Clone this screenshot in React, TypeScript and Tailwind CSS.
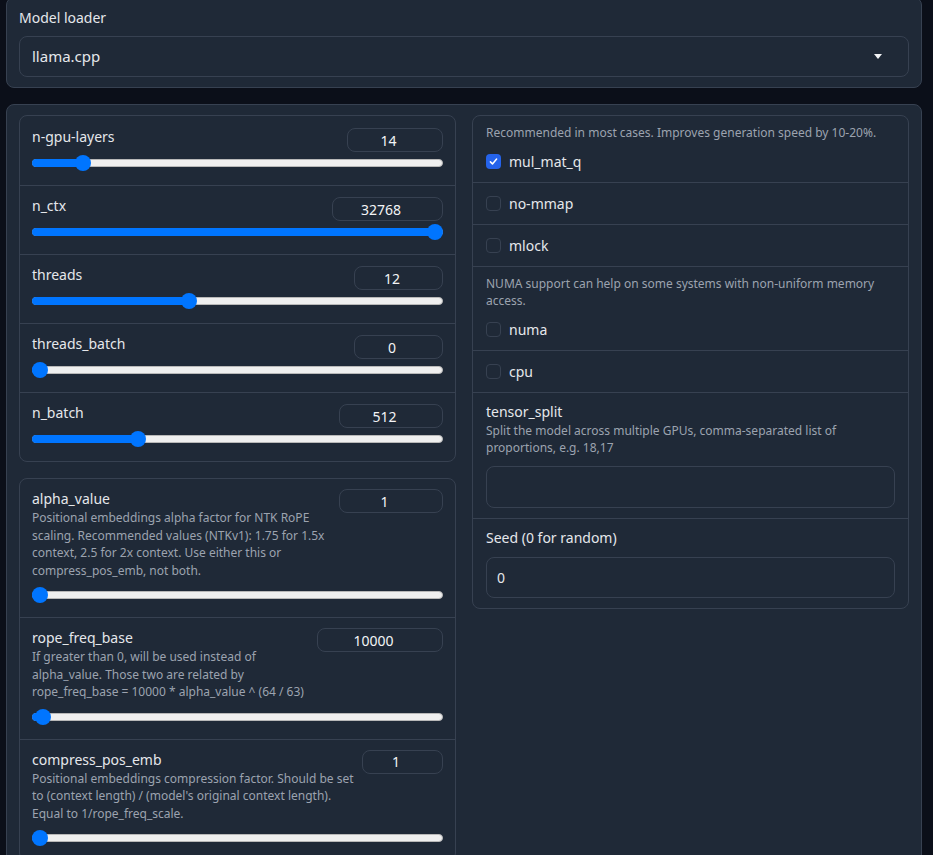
import React from 'react';

type SliderRow = {
  label: string;
  value: string;
  inputW: string;
  pos: number;
  info?: string;
};

const topSliders: SliderRow[] = [
  { label: 'n-gpu-layers', value: '14', inputW: 'w-[96px]', pos: 0.109 },
  { label: 'n_ctx', value: '32768', inputW: 'w-[111px]', pos: 1 },
  { label: 'threads', value: '12', inputW: 'w-[89px]', pos: 0.376 },
  { label: 'threads_batch', value: '0', inputW: 'w-[89px]', pos: 0 },
  { label: 'n_batch', value: '512', inputW: 'w-[104px]', pos: 0.249 },
];

const ropeSliders: SliderRow[] = [
  {
    label: 'alpha_value',
    value: '1',
    inputW: 'w-[104px]',
    pos: 0,
    info: 'Positional embeddings alpha factor for NTK RoPE scaling. Recommended values (NTKv1): 1.75 for 1.5x context, 2.5 for 2x context. Use either this or compress_pos_emb, not both.',
  },
  {
    label: 'rope_freq_base',
    value: '10000',
    inputW: 'w-[126px]',
    pos: 0.008,
    info: 'If greater than 0, will be used instead of alpha_value. Those two are related by rope_freq_base = 10000 * alpha_value ^ (64 / 63)',
  },
  {
    label: 'compress_pos_emb',
    value: '1',
    inputW: 'w-[81px]',
    pos: 0,
    info: "Positional embeddings compression factor. Should be set to (context length) / (model's original context length). Equal to 1/rope_freq_scale.",
  },
];

function Slider({ pos }: { pos: number }) {
  return (
    <div className="relative h-4 w-full">
      <div className="absolute left-0 right-0 top-1/2 h-[8px] -translate-y-1/2 rounded-full border border-[#b8b8b8] bg-[#efefef]" />
      <div
        className="absolute left-0 top-1/2 h-[8px] -translate-y-1/2 rounded-full bg-[#0075ff]"
        style={{ width: `calc(8px + (100% - 16px) * ${pos})` }}
      />
      <div
        className="absolute top-0 h-4 w-4 rounded-full bg-[#0075ff]"
        style={{ left: `calc((100% - 16px) * ${pos})` }}
      />
    </div>
  );
}

function NumberBox({ value, w }: { value: string; w: string }) {
  return (
    <div
      className={`${w} flex h-[24px] shrink-0 items-center justify-center rounded-lg border border-[#374151] bg-[#1f2937] pr-[13px] text-[14px] text-[#f3f4f6]`}
    >
      {value}
    </div>
  );
}

function Checkbox({ label, checked }: { label: string; checked?: boolean }) {
  return (
    <div className="flex h-[21px] items-center gap-2">
      {checked ? (
        <div className="flex h-[15px] w-[15px] items-center justify-center rounded-[4px] bg-[#2563eb]">
          <svg viewBox="0 0 16 16" className="h-[11px] w-[11px]" fill="none">
            <path d="M3.5 8.5l3 3 6-7" stroke="white" strokeWidth="2.2" strokeLinecap="round" strokeLinejoin="round" />
          </svg>
        </div>
      ) : (
        <div className="h-[15px] w-[15px] rounded-[4px] border border-[#374151] bg-[#1f2937]" />
      )}
      <span className="text-[14px] text-[#e5e7eb]">{label}</span>
    </div>
  );
}

export default function App() {
  return (
    <div className="min-h-[855px] bg-[#0b0f19] pl-[6px] pr-[11px] font-['Noto_Sans',sans-serif] text-[#e5e7eb]">
      {/* model loader */}
      <div className="-mt-[3px] rounded-lg border border-[#374151] bg-[#1f2937] px-[12px] pt-[10px] pb-[10px]">
        <div className="text-[14px] leading-[20px]">Model loader</div>
        <div className="mt-[8px] flex h-[41px] items-center justify-between rounded-lg border border-[#374151] bg-[#1f2937] pl-[12px] pr-[26px]">
          <span className="text-[15px]">llama.cpp</span>
          <svg viewBox="0 0 8 5" className="h-[5px] w-[8px]">
            <path d="M0 0h8L4 5z" fill="#f3f4f6" />
          </svg>
        </div>
      </div>

      <div className="mt-[16px] rounded-lg border border-[#374151] bg-[#1f2937] px-[12px] pt-[10px] pb-[12px]">
        <div className="grid grid-cols-2 items-start gap-4">
          {/* left column */}
          <div className="flex flex-col gap-4">
            <div className="rounded-lg border border-[#374151]">
              {topSliders.map((s, i) => (
                <div
                  key={s.label}
                  className={`px-[12px] pb-[14px] ${i === 0 ? 'pt-[12px]' : 'pt-[11px]'} ${i < topSliders.length - 1 ? 'border-b border-[#374151]' : ''}`}
                >
                  <div className="flex items-start justify-between">
                    <span className="-mt-[1px] text-[14px] leading-[20px]">{s.label}</span>
                    <NumberBox value={s.value} w={s.inputW} />
                  </div>
                  <div className="mt-[3px]">
                    <Slider pos={s.pos} />
                  </div>
                </div>
              ))}
            </div>

            <div className="rounded-lg border border-[#374151]">
              {ropeSliders.map((s, i) => (
                <div
                  key={s.label}
                  className={`px-[12px] pt-[10px] pb-[14px] ${i < ropeSliders.length - 1 ? 'border-b border-[#374151]' : ''}`}
                >
                  <div className="flex items-start gap-[8px]">
                    <div className="flex-1">
                      <div className="text-[14px] leading-[20px]">{s.label}</div>
                      <div className="text-[12px] leading-[17.5px] text-[#9ca3af]">{s.info}</div>
                    </div>
                    <NumberBox value={s.value} w={s.inputW} />
                  </div>
                  <div className="mt-[8px]">
                    <Slider pos={s.pos} />
                  </div>
                </div>
              ))}
            </div>
          </div>

          {/* right column */}
          <div className="rounded-lg border border-[#374151]">
            <div className="border-b border-[#374151] px-[13px] pt-[8px] pb-[10px]">
              <div className="text-[12px] leading-[17.5px] text-[#9ca3af]">
                Recommended in most cases. Improves generation speed by 10-20%.
              </div>
              <div className="mt-[9px]">
                <Checkbox label="mul_mat_q" checked />
              </div>
            </div>
            <div className="border-b border-[#374151] px-[13px] py-[10px]">
              <Checkbox label="no-mmap" />
            </div>
            <div className="border-b border-[#374151] px-[13px] py-[10px]">
              <Checkbox label="mlock" />
            </div>
            <div className="border-b border-[#374151] px-[13px] pt-[8px] pb-[10px]">
              <div className="text-[12px] leading-[17.5px] text-[#9ca3af]">
                NUMA support can help on some systems with non-uniform memory access.
              </div>
              <div className="mt-[9px]">
                <Checkbox label="numa" />
              </div>
            </div>
            <div className="border-b border-[#374151] px-[13px] py-[10px]">
              <Checkbox label="cpu" />
            </div>
            <div className="border-b border-[#374151] px-[13px] pt-[9px] pb-[10px]">
              <div className="text-[14px] leading-[20px]">tensor_split</div>
              <div className="text-[12px] leading-[17.5px] text-[#9ca3af]">
                Split the model across multiple GPUs, comma-separated list of proportions, e.g. 18,17
              </div>
              <div className="mt-[9px] h-[42px] rounded-lg border border-[#374151] bg-[#1f2937]" />
            </div>
            <div className="px-[13px] pt-[9px] pb-[10px]">
              <div className="text-[14px] leading-[20px]">Seed (0 for random)</div>
              <div className="mt-[9px] flex h-[41px] items-center rounded-lg border border-[#374151] bg-[#1f2937] px-[10px] text-[14px]">
                0
              </div>
            </div>
          </div>
        </div>
      </div>
    </div>
  );
}
